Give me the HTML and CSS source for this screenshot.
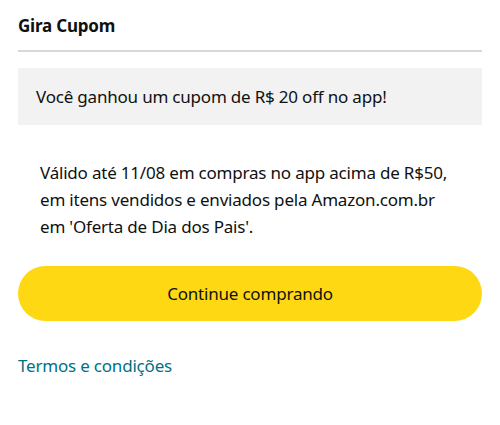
FILE: index.html
```html
<!DOCTYPE html>
<html lang="pt-BR">
<head>
    <meta charset="UTF-8">
    <title>Gira Cupom</title>
    <link rel="stylesheet" href="styles.css">
</head>
<body>
    <div class="coupon-sheet">
        <!-- cabeçalho -->
        <h1 class="sheet-title">Gira Cupom</h1>

        <!-- mensagem do prêmio -->
        <div class="prize-box">Você ganhou um cupom de R$ 20 off no app!</div>

        <!-- regras -->
        <p class="prize-rules">Válido até 11/08 em compras no app acima de R$50, em itens vendidos e enviados pela Amazon.com.br em 'Oferta de Dia dos Pais'.</p>

        <button class="continue-button">Continue comprando</button>

        <a class="terms-link" href="#">Termos e condições</a>
    </div>
</body>
</html>
```

FILE: styles.css
```css
/* Gira Cupom */
:root {
    --text-dark: #0F1111;
    --divider: #D5D9D9;
    --box-gray: #F2F2F2;
    --button-yellow: #FFD814;
    --link-teal: #007185;
}

body {
    margin: 0;
    font-family: 'Noto Sans', 'Open Sans', sans-serif;
    letter-spacing: -0.2px;
    background: white;
    color: var(--text-dark);
}

.coupon-sheet {
    display: flex;
    flex-direction: column;
    padding: 14px 18px 0 18px;
}

.sheet-title {
    margin: 0;
    font-size: 17px;
    font-weight: 700;
    line-height: 24px;
    padding-bottom: 12px;
    border-bottom: 2px solid var(--divider);
}

.prize-box {
    margin-top: 16px;
    background: var(--box-gray);
    padding: 16px 18px;
    font-size: 17px;
    line-height: 25px;
}

.prize-rules {
    margin: 34px 0 0 0;
    padding: 0 22px;
    font-size: 17px;
    line-height: 27px;
}

.continue-button {
    margin-top: 26px;
    height: 55px;
    border: none;
    border-radius: 28px;
    background: var(--button-yellow);
    color: var(--text-dark);
    font-family: inherit;
    letter-spacing: inherit;
    font-size: 17px;
    cursor: pointer;
}

.terms-link {
    margin-top: 33px;
    color: var(--link-teal);
    text-decoration: none;
    font-size: 17px;
    line-height: 24px;
    align-self: flex-start;
}
```
